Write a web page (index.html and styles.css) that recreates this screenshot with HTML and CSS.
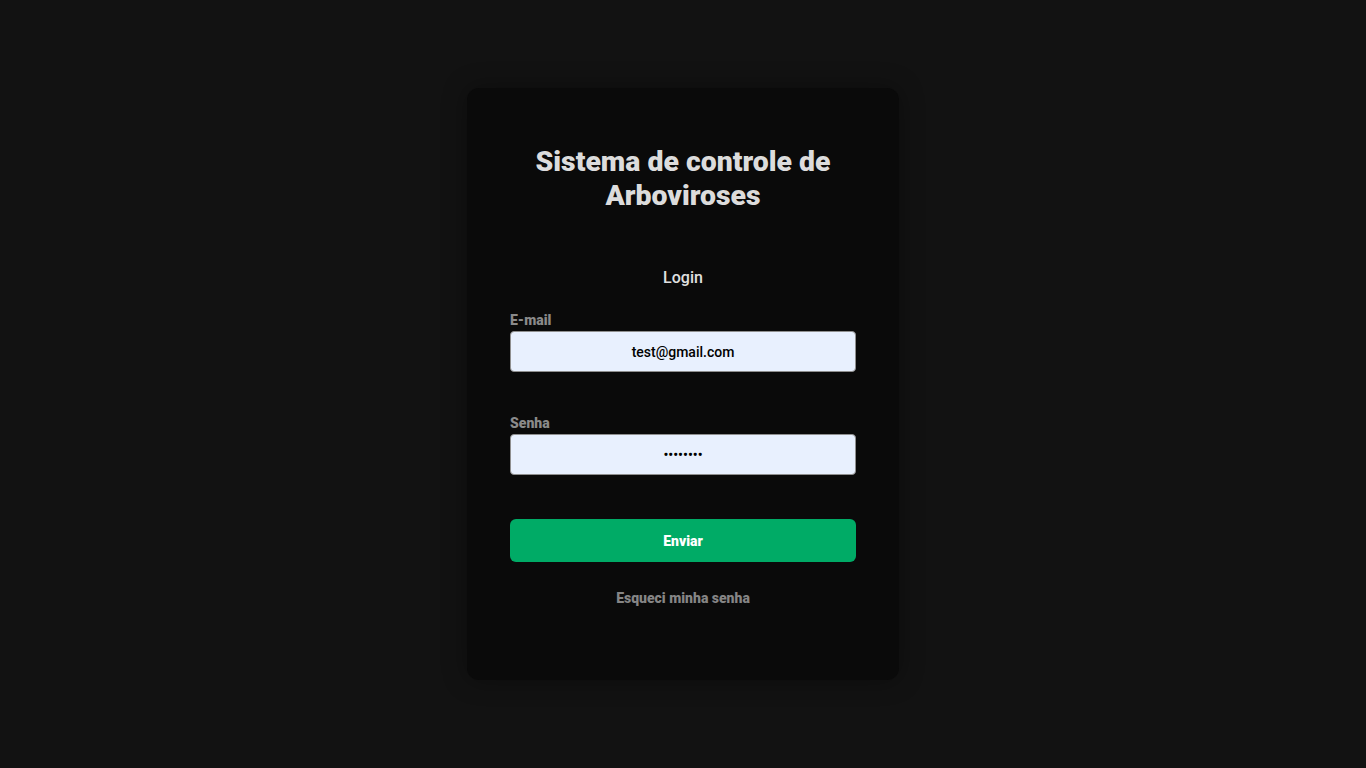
FILE: index.html
```html
<!DOCTYPE html>
<html lang="pt-BR">
<head>
<meta charset="utf-8">
<title>Login</title>
<link rel="stylesheet" href="styles.css">
</head>
<body>
<main class="page">
  <section class="card">
    <h1 class="title">Sistema de controle de Arboviroses</h1>
    <h2 class="subtitle">Login</h2>
    <form class="form">
      <div class="field">
        <label class="label" for="email">E-mail</label>
        <input class="input" id="email" type="email" value="test@gmail.com">
      </div>
      <div class="field">
        <label class="label" for="senha">Senha</label>
        <input class="input" id="senha" type="password" value="12345678">
      </div>
      <button class="btn" type="button">Enviar</button>
    </form>
    <a class="forgot" href="#">Esqueci minha senha</a>
  </section>
</main>
</body>
</html>
```

FILE: styles.css
```css
* { box-sizing: border-box; }
html, body { margin: 0; height: 100%; }
body {
  background: #121212;
  font-family: Roboto, "Liberation Sans", sans-serif;
}
.page {
  height: 100vh;
  display: flex;
  align-items: center;
  justify-content: center;
}
.card {
  width: 432px;
  height: 592px;
  background: #0a0a0a;
  border-radius: 12px;
  box-shadow: 0 0 24px rgba(0,0,0,0.35);
  padding: 57px 43px 0;
  display: flex;
  flex-direction: column;
  align-items: center;
}
.title {
  margin: 0;
  color: #dcdcdc;
  font-size: 28.4px;
  line-height: 34px;
  font-weight: 900;
  text-align: center;
  width: 320px;
}
.subtitle {
  margin: 54px 0 0;
  color: #e0e0e0;
  font-size: 16px;
  line-height: 22px;
  font-weight: 500;
}
.form {
  width: 100%;
  margin-top: 20px;
  display: flex;
  flex-direction: column;
}
.field {
  display: flex;
  flex-direction: column;
  margin-bottom: 40px;
}
.label {
  color: #8a8a8a;
  font-size: 14px;
  font-weight: 900;
  line-height: 22px;
}
.input {
  height: 41px;
  width: 100%;
  border: 1px solid #8f8f8f;
  border-radius: 4px;
  background: #e8f0fe;
  color: #000;
  text-align: center;
  font-family: Roboto, "Liberation Sans", sans-serif;
  font-size: 14px;
  font-weight: 500;
  outline: none;
}
.field:last-of-type { margin-bottom: 44px; }
.btn {
  height: 43px;
  width: 100%;
  border: none;
  border-radius: 6px;
  background: #00ab66;
  color: #fff;
  font-family: Roboto, "Liberation Sans", sans-serif;
  font-size: 14px;
  font-weight: 900;
}
.forgot {
  margin-top: 28px;
  color: #858585;
  font-size: 14px;
  font-weight: 900;
  text-decoration: none;
}
```
